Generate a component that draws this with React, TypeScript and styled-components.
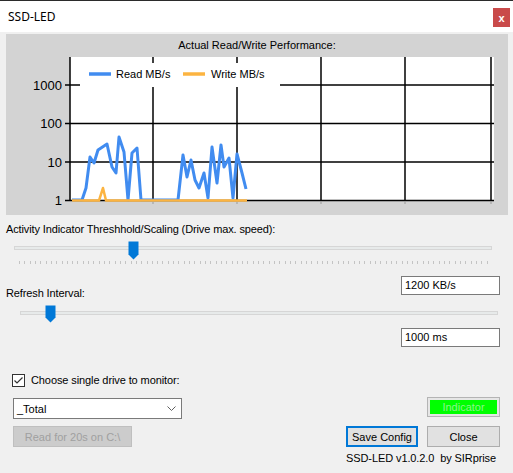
import React from "react";
import styled, { createGlobalStyle } from "styled-components";

const GlobalStyle = createGlobalStyle`
  html, body {
    margin: 0;
    padding: 0;
    background: #f0f0f0;
  }
  body {
    font-family: "Liberation Sans", Arial, sans-serif;
    font-size: 11px;
    color: #000;
  }
`;

const Window = styled.div`
  width: 513px;
  height: 473px;
  box-sizing: border-box;
  border-top: 1px solid #2b2b2b;
  background: #f0f0f0;
  overflow: hidden;
`;

const TitleBar = styled.div`
  height: 31px;
  background: #fff;
  display: flex;
  align-items: center;
  justify-content: space-between;
  padding: 0 3px 0 8px;
`;

const Title = styled.span`
  font-family: "Noto Sans", "Open Sans", sans-serif;
  font-size: 12px;
`;

const CloseX = styled.div`
  width: 17px;
  height: 19px;
  margin-top: 2px;
  background: #c94a4a;
  color: #fff;
  font-size: 11px;
  font-weight: bold;
  display: flex;
  align-items: center;
  justify-content: center;
`;

const ChartPanel = styled.div`
  width: 502px;
  height: 181px;
  margin: 2px 0 0 6px;
  background: #d3d3d3;
  display: flex;
  flex-direction: column;
`;

const ChartTitle = styled.div`
  height: 22px;
  line-height: 22px;
  text-align: center;
`;

const Label = styled.div<{ $top: number }>`
  margin: ${(p) => p.$top}px 0 0 6px;
  line-height: 13px;
  letter-spacing: -0.12px;
`;

const SliderWrap = styled.div<{ $left: number; $pad: number }>`
  position: relative;
  width: 478px;
  margin-left: ${(p) => p.$left}px;
  padding-top: ${(p) => p.$pad}px;
`;

const Track = styled.div`
  height: 4px;
  box-sizing: border-box;
  background: #e7eaea;
  border: 1px solid #d6d6d6;
`;

const Ticks = styled.div<{ $spread?: boolean; $h: number }>`
  display: flex;
  justify-content: ${(p) => (p.$spread ? "space-between" : "flex-start")};
  gap: ${(p) => (p.$spread ? "0" : "48px")};
  height: ${(p) => p.$h}px;
  margin: 11px 4px 0 5px;
`;

const Tick = styled.span<{ $end?: boolean }>`
  width: 1px;
  height: 100%;
  background: #c4c4c4;
  margin-left: ${(p) => (p.$end ? "auto" : "0")};
`;

const Thumb = styled.svg<{ $x: number }>`
  position: absolute;
  left: ${(p) => p.$x}px;
  top: 5px;
`;

const ValueRow = styled.div<{ $top: number }>`
  display: flex;
  justify-content: space-between;
  align-items: flex-end;
  margin-top: ${(p) => p.$top}px;
  padding-right: 13px;
`;

const TextBox = styled.div<{ $bottom?: number }>`
  width: 99px;
  height: 19px;
  box-sizing: border-box;
  margin-left: auto;
  margin-bottom: ${(p) => p.$bottom ?? 0}px;
  border: 1px solid #7a7a7a;
  background: #fff;
  padding: 0 3px;
  line-height: 17px;
`;

const Bottom = styled.div`
  display: flex;
  justify-content: space-between;
  margin-top: 27px;
  padding: 0 13px 0 12px;
`;

const Column = styled.div<{ $end?: boolean }>`
  display: flex;
  flex-direction: column;
  align-items: ${(p) => (p.$end ? "flex-end" : "flex-start")};
`;

const CheckRow = styled.label`
  display: flex;
  align-items: center;
  gap: 6px;
  line-height: 13px;
  letter-spacing: -0.1px;
`;

const CheckBox = styled.span`
  width: 13px;
  height: 13px;
  box-sizing: border-box;
  border: 1px solid #333;
  background: #fff;
  display: flex;
`;

const Combo = styled.div`
  width: 169px;
  height: 21px;
  box-sizing: border-box;
  margin: 11px 0 0 1px;
  border: 1px solid #7a7a7a;
  background: #fff;
  display: flex;
  align-items: center;
  justify-content: space-between;
  padding: 0 5px 0 3px;
`;

const Button = styled.div<{ $w: number; $primary?: boolean; $disabled?: boolean }>`
  width: ${(p) => p.$w}px;
  height: 21px;
  box-sizing: border-box;
  display: flex;
  align-items: center;
  justify-content: center;
  background: ${(p) => (p.$disabled ? "#cccccc" : "#e1e1e1")};
  color: ${(p) => (p.$disabled ? "#a0a0a0" : "#000")};
  border: ${(p) =>
    p.$primary ? "2px solid #0078d7" : p.$disabled ? "1px solid #bfbfbf" : "1px solid #adadad"};
`;

const ReadButton = styled(Button)`
  margin: 7px 0 0 1px;
`;

const Indicator = styled.div`
  width: 73px;
  height: 20px;
  box-sizing: border-box;
  margin-top: 23px;
  border: 1px solid #b4b4b4;
  padding: 2px;
  background: #e6e6e6;
  display: flex;
`;

const IndicatorFill = styled.div`
  flex: 1;
  background: #00ff00;
  color: #8cf58c;
  display: flex;
  align-items: center;
  justify-content: center;
`;

const ButtonRow = styled.div`
  display: flex;
  gap: 9px;
  margin-top: 9px;
`;

const Footer = styled.div`
  margin: 5px 4px 0 0;
  line-height: 13px;
  letter-spacing: -0.1px;
`;

const readA = [
  [72, 200], [82, 200], [86, 188], [90, 157], [94, 163], [98, 150], [107, 144], [112, 167],
  [116, 173], [119, 137], [124, 152], [128, 200], [132, 153], [137, 148], [141, 200], [178, 200],
  [183, 155], [187, 177], [191, 160], [195, 180], [199, 188], [204, 173], [208, 198], [212, 147],
  [217, 183], [221, 145], [224, 167], [229, 158], [233, 198], [237, 154], [242, 173], [246, 189],
];
const writeA = [[72, 200.5], [99, 200.5], [103, 188], [106, 200.5], [247, 200.5]];

const pts = (a: number[][]) => a.map((p) => p.join(",")).join(" ");

const yLabels = [
  { v: "1000", y: 85 },
  { v: "100", y: 123.5 },
  { v: "10", y: 162 },
  { v: "1", y: 200.5 },
];
const xGrid = [153, 237, 321, 405, 491];

const Chart = () => (
  <svg width="502" height="159" viewBox="6 56 502 159">
    <rect x="70" y="57" width="424" height="144" fill="#fff" />
    {yLabels.map((l) => (
      <g key={l.v}>
        <line x1="65" x2="494" y1={l.y} y2={l.y} stroke="#000" strokeWidth="1.5" />
        <text x="62" y={l.y + 4.6} fontSize="13" textAnchor="end" fontFamily="Liberation Sans, Arial, sans-serif">
          {l.v}
        </text>
      </g>
    ))}
    {xGrid.map((x) => (
      <g key={x}>
        <line x1={x} x2={x} y1="57" y2="201" stroke="#000" strokeWidth="1.5" />
        <line x1={x} x2={x} y1="201" y2="204" stroke="#999" strokeWidth="1" />
      </g>
    ))}
    <line x1="70" x2="70" y1="57" y2="201" stroke="#000" strokeWidth="1.5" />
    <rect x="80" y="63" width="200" height="24" fill="#fff" />
    <line x1="89" x2="111" y1="74" y2="74" stroke="#418cf0" strokeWidth="3.5" />
    <text x="116" y="78" fontSize="11" fontFamily="Liberation Sans, Arial, sans-serif">Read MB/s</text>
    <line x1="183" x2="205" y1="74" y2="74" stroke="#fcb441" strokeWidth="3.5" />
    <text x="211" y="78" fontSize="11" fontFamily="Liberation Sans, Arial, sans-serif">Write MB/s</text>
    <polyline points={pts(readA)} fill="none" stroke="#418cf0" strokeWidth="3" strokeLinejoin="round" />
    <polyline points={pts(writeA)} fill="none" stroke="#fcb441" strokeWidth="2.5" strokeLinejoin="round" />
  </svg>
);

const ThumbIcon = ({ x, h }: { x: number; h: number }) => (
  <Thumb $x={x} width="11" height={h} viewBox={`0 0 11 ${h}`}>
    <path d={`M0.5 0.5 H10.5 V${h - 5.5} L5.5 ${h - 0.5} L0.5 ${h - 5.5} Z`} fill="#0078d7" />
  </Thumb>
);

export default function App() {
  const fineTicks = Array.from({ length: 89 }, (_, i) => i);
  const coarseTicks = Array.from({ length: 10 }, (_, i) => i);
  return (
    <Window>
      <GlobalStyle />
      <TitleBar>
        <Title>SSD-LED</Title>
        <CloseX>x</CloseX>
      </TitleBar>

      <ChartPanel>
        <ChartTitle>Actual Read/Write Performance:</ChartTitle>
        <Chart />
      </ChartPanel>

      <Label $top={8}>Activity Indicator Threshhold/Scaling (Drive max. speed):</Label>
      <SliderWrap $left={14} $pad={10}>
        <Track />
        <Ticks $spread $h={3}>
          {fineTicks.map((i) => (
            <Tick key={i} />
          ))}
        </Ticks>
        <ThumbIcon x={114} h={19} />
      </SliderWrap>

      <ValueRow $top={12}>
        <Label $top={0}>Refresh Interval:</Label>
        <TextBox $bottom={5}>1200 KB/s</TextBox>
      </ValueRow>

      <SliderWrap $left={20} $pad={11}>
        <Track />
        <Ticks $h={2}>
          {coarseTicks.map((i) => (
            <Tick key={i} />
          ))}
          <Tick $end />
        </Ticks>
        <ThumbIcon x={25} h={18} />
      </SliderWrap>

      <ValueRow $top={0}>
        <TextBox>1000 ms</TextBox>
      </ValueRow>

      <Bottom>
        <Column>
          <CheckRow>
            <CheckBox>
              <svg width="11" height="11" viewBox="0 0 11 11">
                <path d="M1.5 5.5 L4 8 L9.5 2.5" fill="none" stroke="#333" strokeWidth="1.2" />
              </svg>
            </CheckBox>
            Choose single drive to monitor:
          </CheckRow>
          <Combo>
            <span>_Total</span>
            <svg width="9" height="5" viewBox="0 0 9 5">
              <path d="M0.5 0.5 L4.5 4.5 L8.5 0.5" fill="none" stroke="#606060" strokeWidth="1" />
            </svg>
          </Combo>
          <ReadButton $w={119} $disabled>
            Read for 20s on C:\
          </ReadButton>
        </Column>
        <Column $end>
          <Indicator>
            <IndicatorFill>Indicator</IndicatorFill>
          </Indicator>
          <ButtonRow>
            <Button $w={72} $primary>
              Save Config
            </Button>
            <Button $w={73}>Close</Button>
          </ButtonRow>
          <Footer>SSD-LED v1.0.2.0&nbsp; by SIRprise</Footer>
        </Column>
      </Bottom>
    </Window>
  );
}
